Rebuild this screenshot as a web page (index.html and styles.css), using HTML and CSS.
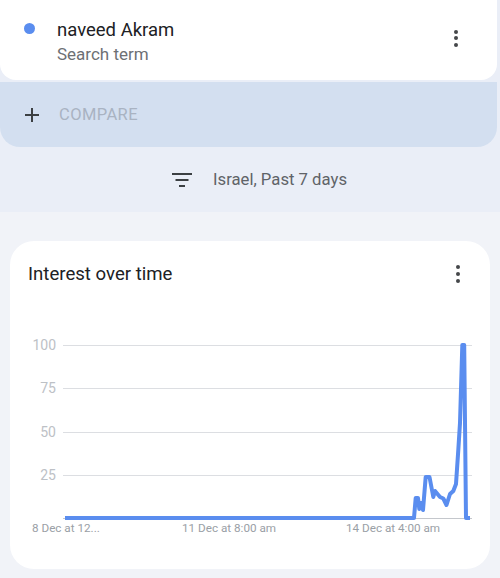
FILE: index.html
```html
<!DOCTYPE html>
<html>
<head>
<meta charset="utf-8">
<link rel="stylesheet" href="styles.css">
</head>
<body>
<div class="top">
  <div class="term-card">
    <span class="dot"></span>
    <div class="term-text">
      <div class="term-name">naveed Akram</div>
      <div class="term-sub">Search term</div>
    </div>
    <span class="kebab"><i></i><i></i><i></i></span>
  </div>
  <div class="compare">
    <svg class="plus" width="16" height="16" viewBox="0 0 16 16"><path d="M8 1v14M1 8h14" stroke="#3c4043" stroke-width="2" fill="none"/></svg>
    <span class="compare-label">COMPARE</span>
  </div>
  <div class="filter">
    <svg width="20" height="14" viewBox="0 0 20 14"><path d="M0 1h20M3.5 7h13M7 13h6" stroke="#3c4043" stroke-width="2" fill="none"/></svg>
    <span class="filter-label">Israel, Past 7 days</span>
  </div>
</div>
<div class="card">
  <div class="card-head">
    <span class="card-title">Interest over time</span>
    <span class="kebab"><i></i><i></i><i></i></span>
  </div>
  <svg class="chart" width="480" height="220" viewBox="10 321 480 220">
    <g stroke="#dcdee2" stroke-width="1">
      <line x1="63" y1="345.5" x2="472" y2="345.5"/>
      <line x1="63" y1="388.5" x2="472" y2="388.5"/>
      <line x1="63" y1="432.5" x2="472" y2="432.5"/>
      <line x1="63" y1="475.5" x2="472" y2="475.5"/>
      <line x1="63" y1="518.5" x2="472" y2="518.5" stroke="#c4c7cc"/>
    </g>
    <g class="ylab" text-anchor="end">
      <text x="56" y="350">100</text>
      <text x="56" y="393">75</text>
      <text x="56" y="437">50</text>
      <text x="56" y="480">25</text>
    </g>
    <g class="xlab">
      <text x="32" y="532">8 Dec at 12...</text>
      <text x="182" y="532">11 Dec at 8:00 am</text>
      <text x="346" y="532">14 Dec at 4:00 am</text>
    </g>
    <polyline fill="none" stroke="#5a8def" stroke-width="4" stroke-linejoin="round" points="65,518 414,518 415.7,498 418,498 419.3,509 421,503 423,510 425.7,477 429.5,477 433.3,497 435,491 440,497 443.3,498.5 446.5,505 450,494 453.3,491 456,484 458.3,450 460,423 462.3,345 464.2,345 466,518 470,518"/>
  </svg>
</div>
</body>
</html>
```
FILE: styles.css
```css
html, body {
  margin: 0;
  padding: 0;
}
body {
  width: 500px;
  background: #f1f3f8;
  font-family: Roboto, "Noto Sans", sans-serif;
}
.top {
  background: #eaeef7;
  padding-right: 3px;
}
.term-card {
  height: 80px;
  background: #ffffff;
  border-radius: 0 0 16px 16px;
  display: flex;
  align-items: flex-start;
}
.dot {
  width: 11px;
  height: 11px;
  border-radius: 50%;
  background: #5a8def;
  margin: 23px 0 0 24px;
  flex: none;
}
.term-text {
  margin-left: 22px;
  padding-top: 18px;
  flex: 1;
}
.term-name {
  font-size: 18.5px;
  line-height: 24px;
  color: #202124;
}
.term-sub {
  font-size: 17px;
  line-height: 22px;
  color: #6d7074;
  margin-top: 1px;
}
.kebab {
  display: flex;
  flex-direction: column;
  gap: 2.7px;
  width: 4px;
}
.kebab i {
  display: block;
  width: 4px;
  height: 4px;
  border-radius: 50%;
  background: #45474a;
}
.term-card .kebab {
  margin: 29.5px 39px 0 0;
}
.compare {
  margin-top: 2px;
  height: 65px;
  background: #d3dff0;
  border-radius: 0 0 20px 20px;
  display: flex;
  align-items: center;
  padding-left: 24px;
}
.plus {
  margin-right: 19px;
}
.compare-label {
  font-size: 16.5px;
  letter-spacing: 0.4px;
  color: #a9b3c2;
}
.filter {
  height: 65px;
  display: flex;
  align-items: center;
  justify-content: center;
  gap: 21px;
  padding-left: 22px;
}
.filter-label {
  font-size: 16.7px;
  color: #5f6368;
}
.card {
  margin: 29px 10px 0;
  height: 328px;
  background: #ffffff;
  border-radius: 24px;
}
.card-head {
  display: flex;
  justify-content: space-between;
  align-items: center;
  height: 26px;
  padding: 20px 30px 0 18px;
}
.card-title {
  font-size: 18.6px;
  color: #202124;
}
.chart {
  display: block;
  margin-top: 34px;
}
.ylab text {
  font-family: Roboto, sans-serif;
  font-size: 14px;
  fill: #bdc1c6;
}
.xlab text {
  font-family: Roboto, sans-serif;
  font-size: 11.7px;
  fill: #9aa0a6;
}
```
